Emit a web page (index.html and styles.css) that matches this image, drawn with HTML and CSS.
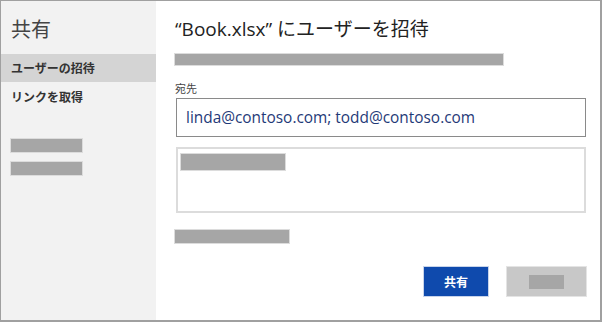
FILE: index.html
```html
<!DOCTYPE html>
<html lang="ja">
<head>
    <meta charset="UTF-8">
    <title>共有</title>
    <link rel="stylesheet" href="styles.css">
</head>
<body>
<div id="dialog" class="row">
    <div id="side" class="col">
        <h2 id="side-title">共有</h2>
        <div class="side-item selected">ユーザーの招待</div>
        <div class="side-item">リンクを取得</div>
        <div class="bar side-bar first"></div>
        <div class="bar side-bar"></div>
    </div>
    <div id="main" class="col full">
        <h2 id="main-title">“Book.xlsx” にユーザーを招待</h2>
        <div class="bar title-bar"></div>
        <label id="to-label">宛先</label>
        <div id="to-input">linda@contoso.com; todd@contoso.com</div>
        <div id="message-box">
            <div class="bar message-bar"></div>
        </div>
        <div class="bar option-bar"></div>
        <div class="row end buttons">
            <button id="share-button">共有</button>
            <button id="cancel-button"><span class="bar cancel-bar"></span></button>
        </div>
    </div>
</div>
</body>
</html>
```

FILE: styles.css
```css
body {
    margin: 0;
    font-family: "Segoe UI", "Open Sans", "Noto Sans CJK JP", sans-serif;
    color: #333333;
}

#dialog {
    width: 602px;
    height: 322px;
    box-sizing: border-box;
    border: 1px solid #a0a0a0;
    border-right-width: 2px;
    border-bottom-width: 2px;
}

.row {
    display: flex;
    flex-flow: row nowrap;
}

.col {
    display: flex;
    flex-flow: column nowrap;
}

.full {
    flex: 1 1 auto;
}

.end {
    justify-content: flex-end;
}

.bar {
    display: block;
    background-color: #a6a6a6;
    box-shadow: 0 0 0 1px #dcdcdc;
}

#side {
    width: 155px;
    background-color: #f2f2f2;
}

#side-title {
    margin: 14px 0 0 10px;
    height: 39px;
    font-family: "Noto Sans CJK JP", sans-serif;
    font-size: 20px;
    font-weight: 400;
    line-height: 28px;
    color: #444444;
}

.side-item {
    height: 28px;
    line-height: 28px;
    padding-left: 10px;
    font-family: "Noto Sans CJK JP", sans-serif;
    font-size: 12px;
    font-weight: 700;
    color: #333333;
}

.side-item.selected {
    background-color: #d4d4d4;
    margin-bottom: 1px;
}

.side-bar {
    width: 71px;
    height: 13px;
    margin: 10px 0 0 10px;
}

.side-bar.first {
    margin-top: 28px;
}

#main {
    background-color: #ffffff;
    padding: 0 14px 0 19px;
}

#main-title {
    margin: 14px 0 0 0;
    height: 39px;
    font-family: "Segoe UI", "Open Sans", "Noto Sans CJK JP", sans-serif;
    font-size: 19px;
    font-weight: 400;
    line-height: 28px;
    color: #222222;
}

.title-bar {
    width: 328px;
    height: 11px;
}

#to-label {
    margin-top: 13px;
    height: 20px;
    font-family: "Noto Sans CJK JP", sans-serif;
    font-size: 11px;
    line-height: 20px;
    color: #444444;
}

#to-input {
    margin: 0 0 0 1px;
    height: 39px;
    box-sizing: border-box;
    border: 1px solid #8a8a8a;
    padding-left: 9px;
    font-size: 15.4px;
    line-height: 37px;
    color: #1f3a78;
}

#message-box {
    margin: 10px 0 0 1px;
    height: 66px;
    box-sizing: border-box;
    border: 2px solid #dcdcdc;
    padding: 5px 0 0 3px;
}

.message-bar {
    width: 104px;
    height: 16px;
}

.option-bar {
    margin-top: 17px;
    width: 114px;
    height: 13px;
}

.buttons {
    margin-top: 24px;
    gap: 19px;
}

button {
    height: 29px;
    border: none;
    padding: 0;
    font-family: "Noto Sans CJK JP", sans-serif;
    font-size: 12px;
    font-weight: 700;
}

#share-button {
    width: 64px;
    background-color: #0f4aad;
    color: #ffffff;
    box-shadow: 0 0 0 1px #c8d4ea;
}

#cancel-button {
    width: 79px;
    background-color: #c8c8c8;
    display: flex;
    align-items: center;
    justify-content: center;
    box-shadow: 0 0 0 1px #e4e4e4;
}

.cancel-bar {
    width: 35px;
    height: 14px;
    box-shadow: none;
}
```
